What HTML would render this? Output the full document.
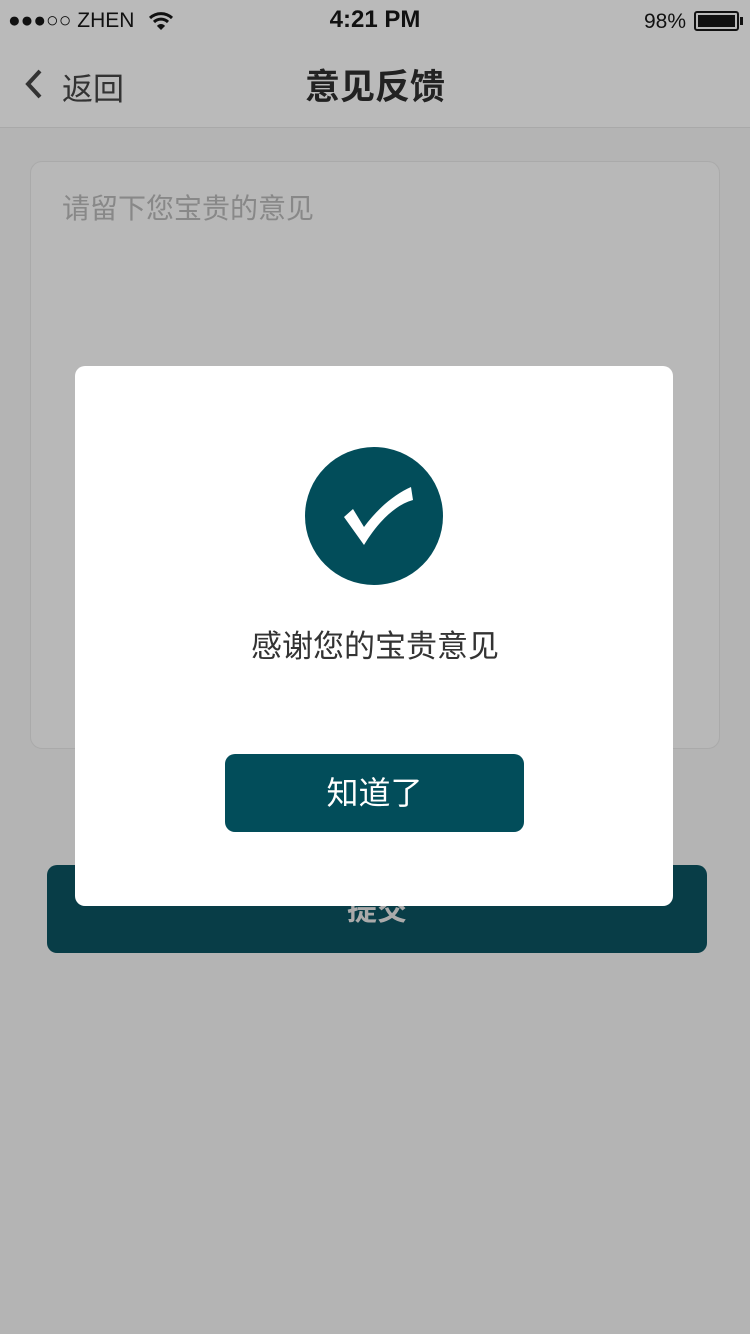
<!DOCTYPE html>
<html><head><meta charset="utf-8"><style>
*{margin:0;padding:0;box-sizing:border-box}
body{width:750px;height:1334px;background:#b4b4b4;font-family:"Liberation Sans","Noto Sans CJK SC",sans-serif;position:relative;overflow:hidden}
.abs{position:absolute}
</style></head><body>
<div class="abs" style="left:0;top:0;width:750px;height:128px;background:#bababa;border-bottom:1px solid #a9a9a9"></div>
<div class="abs" style="left:8px;top:9px;font-size:21px;color:#111">●●●○○ ZHEN</div>
<svg class="abs" style="left:148px;top:10px" width="26" height="22" viewBox="0 0 26 22"><path d="M2 8a16 16 0 0 1 22 0" stroke="#111" stroke-width="3" fill="none"/><path d="M6 12a10 10 0 0 1 14 0" stroke="#111" stroke-width="3" fill="none"/><path d="M9 16a5 5 0 0 1 8 0L13 20Z" fill="#111"/></svg>
<div class="abs" style="left:0;width:750px;top:6px;text-align:center;font-size:24px;font-weight:bold;color:#111">4:21 PM</div>
<div class="abs" style="left:644px;top:10px;font-size:21px;color:#111">98%</div>
<div class="abs" style="left:694px;top:11px;width:45px;height:20px;border:2px solid #111;border-radius:3px;padding:2px"><div style="width:100%;height:100%;background:#111"></div></div>
<div class="abs" style="left:740px;top:17px;width:3px;height:8px;background:#111"></div>
<svg class="abs" style="left:22px;top:68px" width="24" height="32"><path d="M18 3L6 16l12 13" stroke="#333" stroke-width="4" fill="none"/></svg>
<div class="abs" style="left:62px;top:64px;font-size:31px;color:#333">返回</div>
<div class="abs" style="left:0;width:750px;top:59px;text-align:center;font-size:35px;font-weight:bold;color:#222">意见反馈</div>
<div class="abs" style="left:30px;top:161px;width:690px;height:588px;border:1px solid #aaa;border-radius:12px;background:#b8b8b8"></div>
<div class="abs" style="left:62px;top:187px;font-size:28px;color:#888">请留下您宝贵的意见</div>
<div class="abs" style="left:47px;top:865px;width:660px;height:88px;border-radius:10px;background:#083d47;color:#aaa;font-size:30px;text-align:center;line-height:92px;font-weight:bold">提交</div>
<div class="abs" style="left:75px;top:366px;width:598px;height:540px;background:#fff;border-radius:10px"></div>
<svg class="abs" style="left:0;top:0" width="750" height="600"><circle cx="374" cy="516" r="69" fill="#024d5a"/><path d="M344 517L353 509L364 527C378 508 395 494 411 487L413 500C395 505 378 522 364 545Z" fill="#fff"/></svg>
<div class="abs" style="left:0;width:750px;top:621px;text-align:center;font-size:31px;color:#333">感谢您的宝贵意见</div>
<div class="abs" style="left:225px;top:754px;width:299px;height:78px;border-radius:10px;background:#024d5a;color:#fff;font-size:32px;text-align:center;line-height:78px">知道了</div>
</body></html>
